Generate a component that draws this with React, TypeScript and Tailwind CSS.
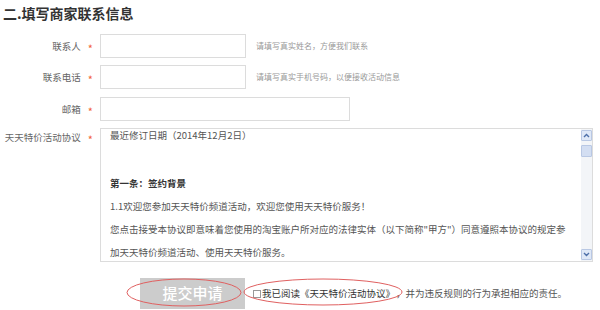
import React from "react";

const FONT = '"Noto Sans CJK SC", "Noto Sans", "Liberation Sans", sans-serif';

function Star() {
  return (
    <span className="ml-[7px] mt-[5px] text-[11px] leading-none text-[#f2623a]">*</span>
  );
}

function Label({ text }: { text: string }) {
  return (
    <div className="flex w-[100px] shrink-0 items-center justify-end pr-[7px]">
      <span className="text-[9.5px] text-[#666]">{text}</span>
      <Star />
    </div>
  );
}

function Chevron({ up }: { up?: boolean }) {
  return (
    <svg width="7" height="5" viewBox="0 0 7 5">
      <path
        d={up ? "M1 4 L3.5 1.5 L6 4" : "M1 1 L3.5 3.5 L6 1"}
        fill="none"
        stroke="#4d6fa8"
        strokeWidth="1.4"
      />
    </svg>
  );
}

export default function App() {
  return (
    <div
      className="relative h-[310px] w-[600px] overflow-hidden bg-white"
      style={{ fontFamily: FONT }}
    >
      {/* Title */}
      <div className="pl-[3px] pt-[3px] text-[14px] font-bold leading-[20px] text-[#333]">
        二.填写商家联系信息
      </div>

      {/* Contact name */}
      <div className="mt-[11px] flex h-[24px] items-center">
        <Label text="联系人" />
        <div className="h-[24px] w-[146px] border border-[#dcdcdc] bg-white" />
        <span className="ml-[10px] text-[8px] text-[#999]">
          请填写真实姓名，方便我们联系
        </span>
      </div>

      {/* Phone */}
      <div className="mt-[7px] flex h-[24px] items-center">
        <Label text="联系电话" />
        <div className="h-[24px] w-[146px] border border-[#dcdcdc] bg-white" />
        <span className="ml-[10px] text-[8px] text-[#999]">
          请填写真实手机号码，以便接收活动信息
        </span>
      </div>

      {/* Email */}
      <div className="mt-[8px] flex h-[24px] items-center">
        <Label text="邮箱" />
        <div className="h-[24px] w-[250px] border border-[#dcdcdc] bg-white" />
      </div>

      {/* Agreement */}
      <div className="mt-[7px] flex h-[134px] items-start">
        <div className="flex h-[18px] w-[100px] shrink-0 items-center justify-end pr-[7px]">
          <span className="text-[9.5px] text-[#666]">天天特价活动协议</span>
          <Star />
        </div>
        <div className="flex h-[134px] w-[493px] border border-[#dcdcdc] bg-white">
          <div className="flex-1 overflow-hidden pl-[9px] text-[9.5px] leading-[23px] text-[#555]">
            <div className="pt-[1px] leading-[10px]">最近修订日期（2014年12月2日）</div>
            <div className="mt-[32px] font-bold text-[#333]">第一条：签约背景</div>
            <div>1.1欢迎您参加天天特价频道活动，欢迎您使用天天特价服务！</div>
            <div className="whitespace-nowrap">
              您点击接受本协议即意味着您使用的淘宝账户所对应的法律实体（以下简称"甲方"）同意遵照本协议的规定参
            </div>
            <div>加天天特价频道活动、使用天天特价服务。</div>
          </div>
          {/* Scrollbar */}
          <div className="flex w-[11px] flex-col bg-[#f3f5f8]">
            <div className="mt-[1px] flex h-[11px] items-center justify-center rounded-[1px] border border-[#b9c8e4] bg-[#dfe8f7]">
              <Chevron up />
            </div>
            <div className="mt-[4px] h-[12px] rounded-[1px] border border-[#b9c8e4] bg-[#d3def2]" />
            <div className="flex-1" />
            <div className="mb-[1px] flex h-[11px] items-center justify-center rounded-[1px] border border-[#b9c8e4] bg-[#dfe8f7]">
              <Chevron />
            </div>
          </div>
        </div>
      </div>

      {/* Submit row */}
      <div className="mt-[16px] flex h-[31px] items-center pl-[140px]">
        <button className="flex h-[31px] w-[105px] items-center justify-center bg-[#cccccc] text-[15px] font-medium text-white">
          提交申请
        </button>
        <div className="ml-[8px] h-[8px] w-[8px] border border-[#999] bg-white" />
        <span className="ml-[1px] text-[9.5px] text-[#333]">
          我已阅读《天天特价活动协议》
        </span>
        <span className="ml-[1px] text-[9.5px] text-[#555]">
          ，并为违反规则的行为承担相应的责任。
        </span>
      </div>

      {/* Red annotation ellipses */}
      <svg
        className="pointer-events-none absolute left-0 top-0"
        width="600"
        height="310"
      >
        <ellipse cx="184" cy="292.5" rx="57" ry="13.5" fill="none" stroke="#e06060" strokeWidth="1" />
        <ellipse cx="323" cy="292" rx="79" ry="13" fill="none" stroke="#e06060" strokeWidth="1" />
      </svg>
    </div>
  );
}
